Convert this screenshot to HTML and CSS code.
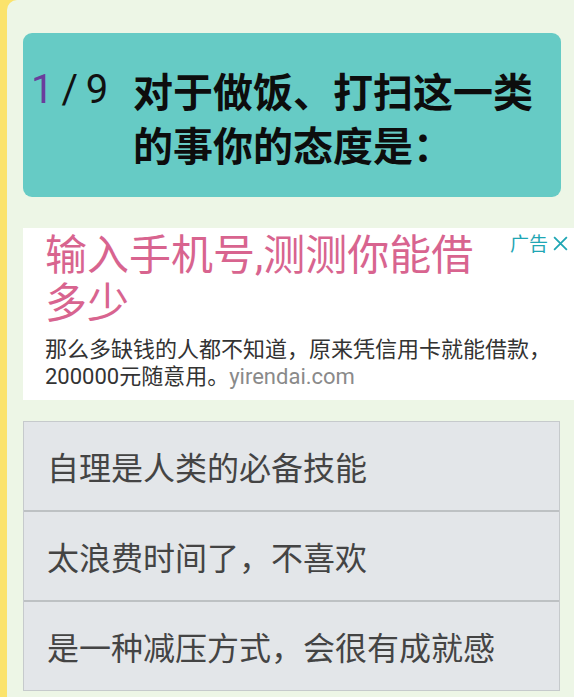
FILE: index.html
```html
<!DOCTYPE html>
<html lang="zh-CN">
<head>
<meta charset="utf-8">
<title>测试</title>
<link rel="stylesheet" href="styles.css">
</head>
<body>
<div class="page">
  <div class="question">
    <div class="counter"><span class="num">1</span> / 9</div>
    <div class="qtext">对于做饭、打扫这一类的事你的态度是：</div>
  </div>
  <div class="ad">
    <div class="ad-title">输入手机号,测测你能借多少</div>
    <div class="ad-desc">那么多缺钱的人都不知道，原来凭信用卡就能借款，200000元随意用。<span class="ad-url">yirendai.com</span></div>
    <div class="ad-label">广告<svg class="ad-close" viewBox="0 0 16 16" width="17" height="17"><path d="M2 2 L14 14 M14 2 L2 14" stroke="#1fa6b4" stroke-width="1.7" fill="none"/></svg></div>
  </div>
  <div class="options">
    <div class="option">自理是人类的必备技能</div>
    <div class="option">太浪费时间了，不喜欢</div>
    <div class="option">是一种减压方式，会很有成就感</div>
  </div>
</div>
</body>
</html>
```
FILE: styles.css
```css
html, body {
  margin: 0;
  padding: 0;
}
body {
  background: #fbe36c;
  font-family: Roboto, "Noto Sans CJK SC", sans-serif;
  width: 574px;
  height: 697px;
  overflow: hidden;
}
.page {
  margin-left: 7px;
  height: 697px;
  background: #edf6e6;
  border-top-left-radius: 10px;
  padding: 33px 0 0 16px;
  box-sizing: border-box;
}
.question {
  width: 538px;
  height: 164px;
  box-sizing: border-box;
  background: #66cbc5;
  border-radius: 9px;
  padding: 30px 10px 26px 8px;
  display: flex;
  align-items: flex-start;
  color: #0d0d0d;
}
.counter {
  font-family: Roboto, sans-serif;
  font-size: 40px;
  line-height: 54px;
  white-space: pre;
  word-spacing: -2px;
  width: 102px;
  flex: none;
  color: #111;
}
.num {
  color: #6a3d9c;
}
.qtext {
  width: 410px;
  flex: none;
  font-family: "Noto Sans CJK SC", sans-serif;
  font-weight: 700;
  font-size: 40px;
  line-height: 54px;
}
.ad {
  position: relative;
  margin-top: 31px;
  background: #ffffff;
  padding: 4px 10px 10px 22px;
  height: 172px;
  box-sizing: border-box;
}
.ad-title {
  max-width: 455px;
  font-size: 42px;
  line-height: 48px;
  color: #d8648f;
}
.ad-desc {
  margin-top: 8px;
  font-size: 22px;
  line-height: 27px;
  color: #333333;
}
.ad-url {
  color: #8a8a8a;
}
.ad-label {
  position: absolute;
  top: 3px;
  right: 5px;
  display: flex;
  align-items: center;
  gap: 4px;
  font-family: "Noto Sans CJK SC", sans-serif;
  font-size: 19px;
  line-height: 24px;
  color: #1fa6b4;
}
.ad-close {
  display: block;
}
.options {
  margin-top: 21px;
  width: 537px;
  box-sizing: border-box;
  border: 1px solid #c6cacc;
  background: #e3e6e9;
}
.option {
  height: 88px;
  display: flex;
  align-items: center;
  padding-left: 23px;
  font-size: 32px;
  color: #444444;
  font-family: "Noto Sans CJK SC", sans-serif;
}
.option + .option {
  border-top: 2px solid #bdc1c3;
}
```
